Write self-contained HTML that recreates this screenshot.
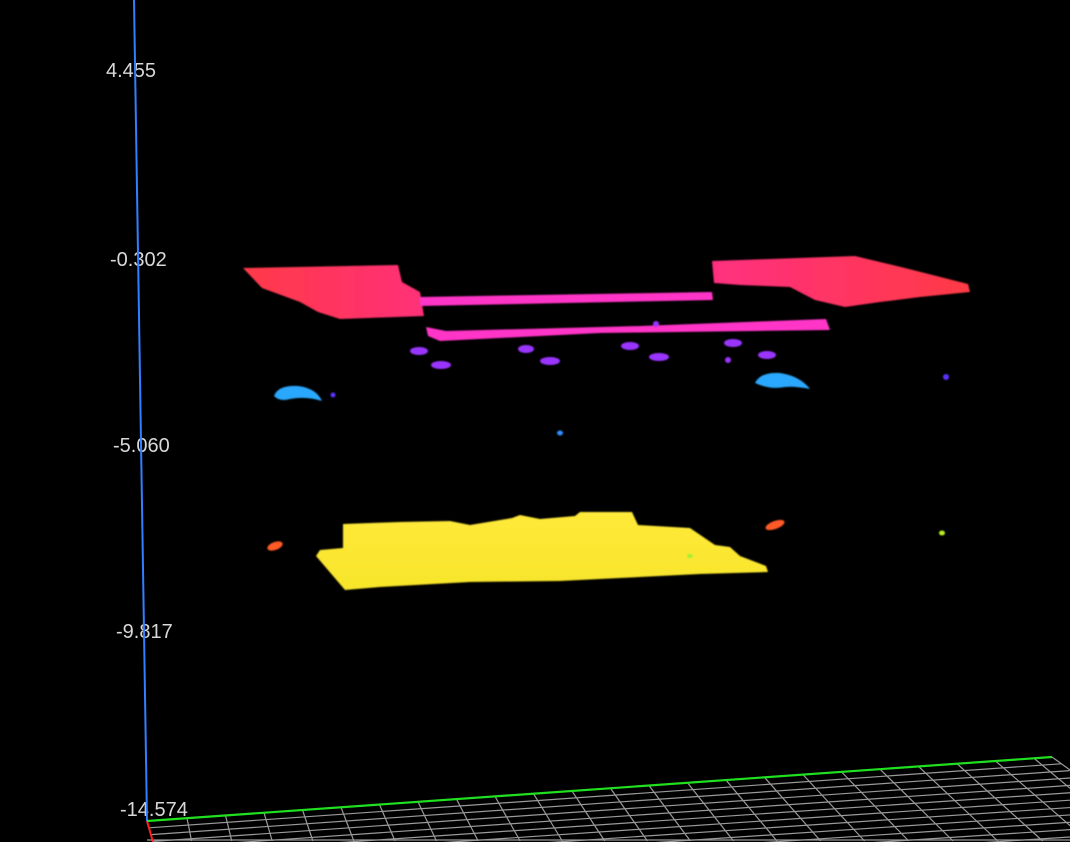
<!DOCTYPE html>
<html><head><meta charset="utf-8"><style>
html,body{margin:0;padding:0;background:#000;width:1070px;height:842px;overflow:hidden}
svg{display:block;overflow:hidden}
text{font-family:"Liberation Sans",sans-serif;font-size:20px;fill:#d8d8d8}
</style></head><body>
<svg id="s" width="1070" height="842" viewBox="0 0 1070 842" xmlns="http://www.w3.org/2000/svg">
<defs>
<linearGradient id="rl" x1="0" x2="1"><stop offset="0" stop-color="#ff3a48"/><stop offset="1" stop-color="#ff2f78"/></linearGradient>
<linearGradient id="rr" x1="0" x2="1"><stop offset="0" stop-color="#ff2f80"/><stop offset="1" stop-color="#ff3a45"/></linearGradient>
<linearGradient id="yl" x1="0" y1="0" x2="0" y2="1"><stop offset="0" stop-color="#ffe93a"/><stop offset="1" stop-color="#f7e52a"/></linearGradient>
<filter id="b"><feGaussianBlur stdDeviation="0.8"/></filter>
</defs>
<g id="grid" stroke="#9a9a9a" stroke-width="1.2" fill="none"></g>
<g filter="url(#b)">
<polygon fill="url(#rl)" points="243,268 398,265 402,282 420,292 424,316 340,319 318,312 300,302 262,288"/>
<polygon fill="#ff35c8" points="420,297 712,292 713,300 420,306"/>
<polygon fill="#ff35c8" points="426,327 446,331 640,326 826,319 830,330 600,333 440,341 428,336"/>
<polygon fill="url(#rr)" points="712,261 855,256 905,268 968,284 970,292 920,297 880,302 845,307 815,300 790,287 740,285 714,283"/>
<g fill="#9a35ff">
<ellipse cx="419" cy="351" rx="9" ry="4"/><ellipse cx="441" cy="365" rx="10" ry="4"/>
<ellipse cx="526" cy="349" rx="8" ry="4"/><ellipse cx="550" cy="361" rx="10" ry="4"/>
<ellipse cx="630" cy="346" rx="9" ry="4"/><ellipse cx="659" cy="357" rx="10" ry="4"/>
<ellipse cx="733" cy="343" rx="9" ry="4"/><ellipse cx="767" cy="355" rx="9" ry="4"/>
<ellipse cx="656" cy="324" rx="3" ry="3"/><ellipse cx="728" cy="360" rx="3" ry="3"/>
</g>
<g fill="#5a30ff"><ellipse cx="946" cy="377" rx="3" ry="3"/><ellipse cx="333" cy="395" rx="2.5" ry="2.5"/></g>
<ellipse cx="560" cy="433" rx="3" ry="2.5" fill="#2f90ff"/>
<path d="M274 396 Q278 385 298 386 Q316 388 322 401 Q306 396 290 399 Q280 402 274 396Z" fill="#2aa8ff"/>
<path d="M755 383 Q760 372 780 373 Q800 376 810 389 Q795 386 785 387 Q770 390 755 383Z" fill="#2aa8ff"/>
<polygon fill="url(#yl)" points="343,524 400,522 450,521 470,525 512,518 520,515 540,519 575,516 580,512 632,512 638,525 690,528 715,545 730,547 740,556 766,566 768,572 700,574 620,578 560,581 470,582 380,587 345,590 316,556 320,550 343,548"/>
<ellipse cx="275" cy="546" rx="8" ry="4" fill="#ff5a28" transform="rotate(-20 275 546)"/>
<ellipse cx="775" cy="525" rx="10" ry="4" fill="#ff5a28" transform="rotate(-20 775 525)"/>
<ellipse cx="942" cy="533" rx="3" ry="2.5" fill="#b8f020"/>
<ellipse cx="690" cy="556" rx="3" ry="2" fill="#9af030"/>
</g>
<text x="106" y="77">4.455</text>
<text x="110" y="266">-0.302</text>
<text x="113" y="452">-5.060</text>
<text x="116" y="638">-9.817</text>
<text x="120" y="816">-14.574</text>
<line x1="134" y1="0" x2="147" y2="821" stroke="#2f7fff" stroke-width="2"/>
<line x1="147" y1="821" x2="153" y2="842" stroke="#ff2020" stroke-width="2"/>
<line x1="147" y1="821" x2="1052" y2="757" stroke="#20e020" stroke-width="2.2"/>
</svg>
<script>
var g=document.getElementById('grid'),ns='http://www.w3.org/2000/svg';
function L(a,b,c,d){var l=document.createElementNS(ns,'line');l.setAttribute('x1',a);l.setAttribute('y1',b);l.setAttribute('x2',c);l.setAttribute('y2',d);g.appendChild(l);}
function yg(x){return 821-(x-147)*64/905;}
for(var k=1;k<13;k++){var o=k*6.8;L(147+o*0.3,821+o,1052+o*1.3,757+o);}
for(var x=187;x<1060;x+=38.5){var y=yg(x),s=0.2+(x-187)/593*0.7;L(x,y,x+s*(841-y),841);}
L(1052,757,1070,770);
L(147,840,1070,840);
</script>
</body></html>
